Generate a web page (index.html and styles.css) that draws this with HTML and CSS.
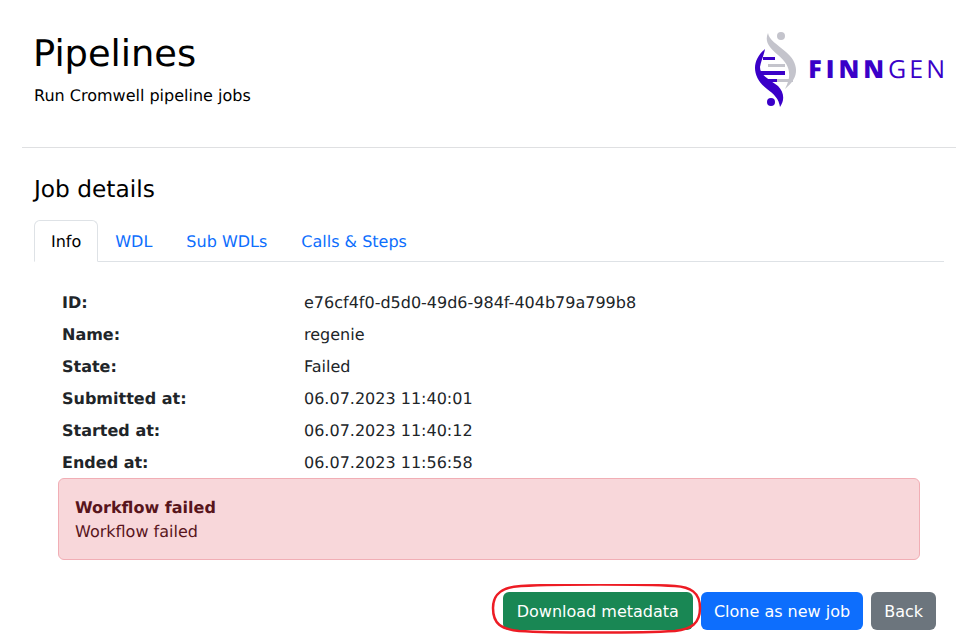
FILE: index.html
```html
<!DOCTYPE html>
<html lang="en">
<head>
  <meta charset="UTF-8" />
  <title>Pipelines</title>
  <link rel="stylesheet" href="styles.css">
</head>
<body>
  <div class="header">
    <div>
      <h1 class="title">Pipelines</h1>
      <div class="subtitle">Run Cromwell pipeline jobs</div>
    </div>
    <div class="logo">
      <svg class="logo-mark" width="50" height="85" viewBox="0 0 50 85">
        <circle cx="31" cy="10" r="4" fill="#c4c4cc"/>
        <path d="M18 7C19 14 27 18 36 26C47 35 52 50 35 63C43 48 39 38 28 29C20 22 14 16 18 7Z" fill="#c4c4cc"/>
        <path d="M18 38H35V41H18ZM26 53H43V56H26Z" fill="#c4c4cc"/>
        <path d="M15 23C14 29 11 35 10 41C10 50 21 54 28 60C34 66 35 74 30 81C29 73 24 68 17 63C10 58 5 50 5 42C5 35 9 28 15 23Z" fill="#3a00c8"/>
        <path d="M13 31H25V34H13ZM10 45H35V49H10ZM15 53H27V56H15Z" fill="#3a00c8"/>
        <circle cx="21" cy="76" r="4" fill="#3a00c8"/>
      </svg>
      <span class="logo-text"><b class="logo-bold">FINN</b>GEN</span>
    </div>
  </div>
  <hr class="divider">
  <div class="content">
    <h2 class="section-title">Job details</h2>
    <ul class="tabs">
      <li class="tab active">Info</li>
      <li class="tab">WDL</li>
      <li class="tab">Sub WDLs</li>
      <li class="tab">Calls &amp; Steps</li>
    </ul>
    <div class="details">
      <div class="row"><span class="label">ID:</span><span>e76cf4f0-d5d0-49d6-984f-404b79a799b8</span></div>
      <div class="row"><span class="label">Name:</span><span>regenie</span></div>
      <div class="row"><span class="label">State:</span><span>Failed</span></div>
      <div class="row"><span class="label">Submitted at:</span><span>06.07.2023 11:40:01</span></div>
      <div class="row"><span class="label">Started at:</span><span>06.07.2023 11:40:12</span></div>
      <div class="row"><span class="label">Ended at:</span><span>06.07.2023 11:56:58</span></div>
    </div>
    <div class="alert">
      <div class="alert-title">Workflow failed</div>
      <div>Workflow failed</div>
    </div>
    <div class="actions">
      <div class="highlight">
        <button class="btn green">Download metadata</button>
        <svg class="ring" width="212" height="50" viewBox="0 0 212 50">
          <path d="M30 2C70 0 150 0 184 2C199 3 209 8 209 24C209 40 200 45 184 47C150 49 60 49 28 47C10 45 2 40 2 24C2 9 12 3 30 2Z" fill="none" stroke="#ed1c24" stroke-width="2.5"/>
        </svg>
      </div>
      <button class="btn blue">Clone as new job</button>
      <button class="btn gray">Back</button>
    </div>
  </div>
</body>
</html>
```

FILE: styles.css
```css
* {
  box-sizing: border-box;
}
body {
  font-family: "DejaVu Sans", sans-serif;
  font-size: 16px;
  line-height: 24px;
  color: #212529;
  background: #fff;
  margin: 0;
  padding: 0 2px 0 22px;
  height: 638px;
  overflow: hidden;
  text-rendering: geometricPrecision;
}
.header {
  display: flex;
  justify-content: space-between;
  padding: 0 10px 0 12px;
  height: 147px;
}
.title {
  font-weight: 400;
  font-size: 36.8px;
  line-height: 44px;
  color: #000;
  margin: 32px 0 0 -1px;
}
.subtitle {
  color: #000;
  margin-top: 8px;
}
.logo {
  display: flex;
  align-items: flex-start;
  padding-top: 26px;
  margin-right: -2px;
}
.logo-text {
  font-family: "Open Sans", sans-serif;
  font-size: 25px;
  line-height: 30px;
  letter-spacing: 3px;
  color: #3a00c8;
  margin: 28px 0 0 8px;
}
.logo-bold {
  font-weight: 800;
  letter-spacing: 4px;
}
.divider {
  margin: 0;
  border: 0;
  border-top: 1px solid #dfe0e2;
}
.content {
  padding: 0 12px;
}
.section-title {
  font-weight: 400;
  font-size: 23.27px;
  line-height: 28px;
  color: #000;
  margin: 28px 0 16px;
}
.tabs {
  display: flex;
  list-style: none;
  margin: 0;
  padding: 0;
  border-bottom: 1px solid #dee2e6;
}
.tab {
  padding: 9px 16px 7px;
  margin-bottom: -1px;
  border: 1px solid transparent;
  border-radius: 6px 6px 0 0;
  color: #0d6efd;
}
.tab.active {
  color: #000;
  background: #fff;
  border-color: #dee2e6 #dee2e6 #fff;
}
.details {
  padding: 24px 28px 0;
}
.row {
  display: flex;
  height: 32px;
  padding: 5px 0 3px;
}
.label {
  width: 242px;
  font-weight: 700;
}
.alert {
  margin: 0 24px;
  height: 82px;
  padding: 17px 16px 15px;
  color: #58151c;
  background: #f8d7da;
  border: 1px solid #f1aeb5;
  border-radius: 6px;
}
.alert-title {
  font-weight: 700;
}
.actions {
  display: flex;
  justify-content: flex-end;
  gap: 8px;
  margin-top: 32px;
  padding-right: 8px;
}
.highlight {
  position: relative;
  display: flex;
}
.ring {
  position: absolute;
  left: -12px;
  top: -8px;
}
.btn {
  font: inherit;
  height: 38px;
  padding: 7px 13px 5px;
  border: 0;
  border-radius: 6px;
  color: #fff;
}
.green {
  padding: 7px 14px 5px;
  background: #198754;
}
.blue {
  background: #0d6efd;
}
.gray {
  background: #6c757d;
}
```
